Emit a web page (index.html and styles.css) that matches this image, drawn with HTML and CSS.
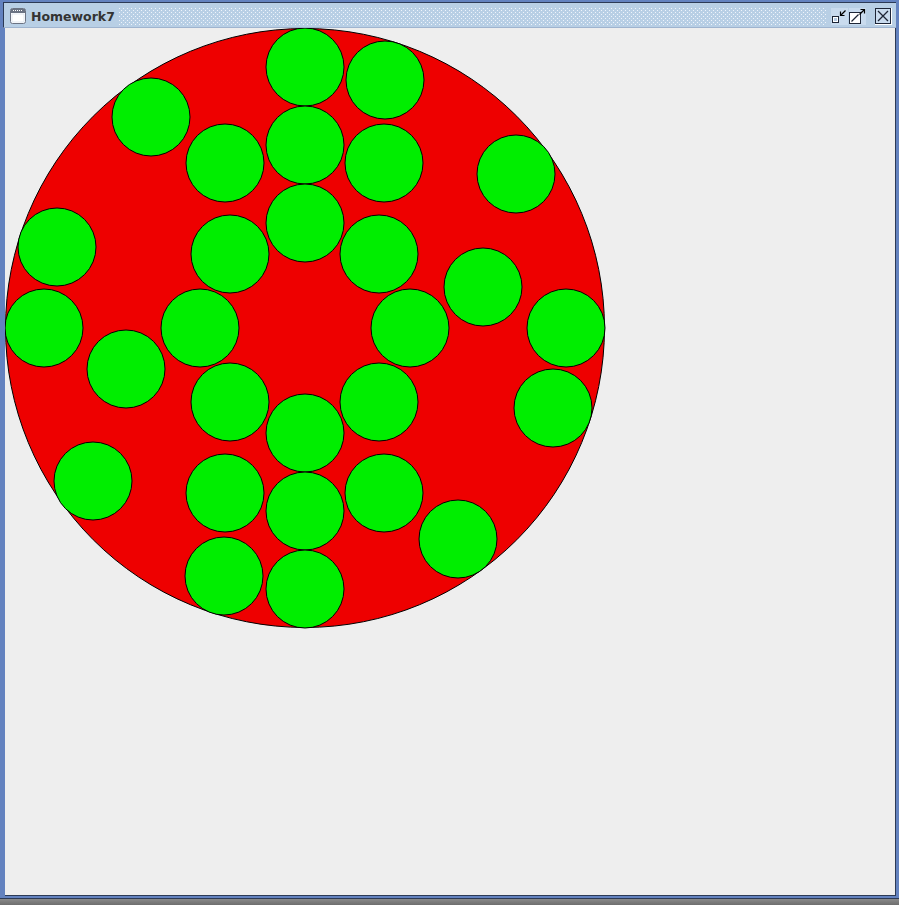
FILE: index.html
```html
<!DOCTYPE html>
<html>
<head>
<meta charset="utf-8">
<title>Homework7</title>
<link rel="stylesheet" href="styles.css">
</head>
<body>
<div class="frame">
  <div class="titlebar">
    <svg class="app-icon" width="16" height="16" viewBox="0 0 16 16">
      <rect x="0.5" y="0.5" width="15" height="15" rx="2" fill="#fff" stroke="#6b7383"/>
      <rect x="1" y="1" width="14" height="4" fill="#6b7383"/>
      <rect x="3" y="2" width="1" height="1" fill="#fff"/>
      <rect x="5" y="2" width="1" height="1" fill="#fff"/>
      <rect x="7" y="2" width="1" height="1" fill="#fff"/>
      <rect x="9" y="2" width="1" height="1" fill="#fff"/>
      <rect x="11" y="2" width="1" height="1" fill="#fff"/>
      <rect x="2" y="6" width="12" height="8" fill="#fff" stroke="#c6d2e2" stroke-width="0.5"/>
    </svg>
    <span class="title">Homework7</span>
    <div class="dots"></div>
    <div class="buttons">
      <svg class="btn" width="17" height="17" viewBox="0 0 17 17">
        <rect x="0" y="0" width="17" height="17" fill="#c9dbee"/>
        <rect x="1.5" y="8.5" width="6" height="6" fill="#fff" stroke="#1d2536"/>
        <rect x="3" y="10" width="3" height="3" fill="#b8cde6"/>
        <path d="M9.5 7.5 L14.5 2.5" stroke="#000" stroke-width="1.2"/>
        <path d="M9.5 3.5 V7.5 H13.5" stroke="#000" stroke-width="1.2" fill="none"/>
      </svg>
      <svg class="btn" width="17" height="17" viewBox="0 0 17 17">
        <rect x="0" y="0" width="17" height="17" fill="#c9dbee"/>
        <rect x="0.5" y="4.5" width="11" height="11" fill="#fff" stroke="#1d2536"/>
        <path d="M2.5 13.5 L9.5 6.5" stroke="#1d2536" stroke-width="1.2"/>
        <path d="M10.5 6.5 L15.5 1.5" stroke="#000" stroke-width="1.2"/>
        <path d="M11.5 1.5 H15.5 V5.5" stroke="#000" stroke-width="1.2" fill="none"/>
      </svg>
      <svg class="btn close" width="17" height="17" viewBox="0 0 17 17">
        <rect x="0" y="0" width="17" height="17" fill="#fff"/>
        <rect x="0.5" y="0.5" width="15" height="15" fill="#c9dbee" stroke="#1d2536"/>
        <path d="M3 3 L13 13 M13 3 L3 13" stroke="#1d2536" stroke-width="1.3"/>
      </svg>
    </div>
  </div>
  <div class="content">
    <svg class="canvas" width="889" height="867" viewBox="0 0 889 867">
      <circle cx="300" cy="300" r="299.5" fill="#ee0000" stroke="#000" stroke-width="1"/>
      <g fill="#00ee00" stroke="#000" stroke-width="1">
        <circle cx="300" cy="39" r="39"/>
        <circle cx="380" cy="52" r="39"/>
        <circle cx="146" cy="89" r="39"/>
        <circle cx="300" cy="117" r="39"/>
        <circle cx="220" cy="135" r="39"/>
        <circle cx="379" cy="135" r="39"/>
        <circle cx="511" cy="146" r="39"/>
        <circle cx="300" cy="195" r="39"/>
        <circle cx="52" cy="219" r="39"/>
        <circle cx="225" cy="226" r="39"/>
        <circle cx="374" cy="226" r="39"/>
        <circle cx="478" cy="259" r="39"/>
        <circle cx="39" cy="300" r="39"/>
        <circle cx="195" cy="300" r="39"/>
        <circle cx="405" cy="300" r="39"/>
        <circle cx="561" cy="300" r="39"/>
        <circle cx="121" cy="341" r="39"/>
        <circle cx="225" cy="374" r="39"/>
        <circle cx="374" cy="374" r="39"/>
        <circle cx="548" cy="380" r="39"/>
        <circle cx="300" cy="405" r="39"/>
        <circle cx="88" cy="453" r="39"/>
        <circle cx="220" cy="465" r="39"/>
        <circle cx="379" cy="465" r="39"/>
        <circle cx="300" cy="483" r="39"/>
        <circle cx="453" cy="511" r="39"/>
        <circle cx="219" cy="548" r="39"/>
        <circle cx="300" cy="561" r="39"/>
      </g>
    </svg>
  </div>
</div>
<div class="desktop"></div>
</body>
</html>
```

FILE: styles.css
```css
html, body {
  margin: 0;
  padding: 0;
}
body {
  width: 899px;
  height: 905px;
  overflow: hidden;
  background: #7a7a7a;
  font-family: "DejaVu Sans", "Liberation Sans", sans-serif;
}
.frame {
  box-sizing: border-box;
  width: 899px;
  height: 899px;
  background: #6382bf;
  padding: 2px 3px 2px 3px;
  display: flex;
  flex-direction: column;
  border-bottom: 1px solid #2c3a55;
}
.titlebar {
  box-sizing: border-box;
  height: 26px;
  flex: none;
  border-top: 1px solid #2c3a55;
  border-left: 1px solid #2c3a55;
  background: #b8cfe5;
  display: flex;
  align-items: center;
  padding: 2px 4px 0 6px;
  border-bottom: 1px solid #9fb4cf;
}
.app-icon {
  flex: none;
}
.title {
  font-weight: bold;
  font-size: 12.5px;
  color: #333333;
  margin-left: 5px;
  margin-right: 4px;
}
.dots {
  flex: 1;
  height: 17px;
  background-color: #b8cfe5;
  background-image:
    radial-gradient(circle at 0.5px 0.5px, #eef4fb 0.6px, transparent 0.8px),
    radial-gradient(circle at 2.5px 2.5px, #eef4fb 0.6px, transparent 0.8px);
  background-size: 4px 4px;
}
.buttons {
  flex: none;
  display: flex;
  align-items: center;
  gap: 1px;
  margin-left: 5px;
}
.btn {
  display: block;
}
.btn.close {
  margin-left: 8px;
}
.content {
  flex: 1;
  background: #eeeeee;
  margin-left: 2px;
  border-right: 1px solid #2c3a55;
  border-bottom: 1px solid #2c3a55;
  overflow: hidden;
}
.canvas {
  display: block;
}
.desktop {
  height: 6px;
  background: linear-gradient(#8a8a8a, #6e6e6e);
}
```
